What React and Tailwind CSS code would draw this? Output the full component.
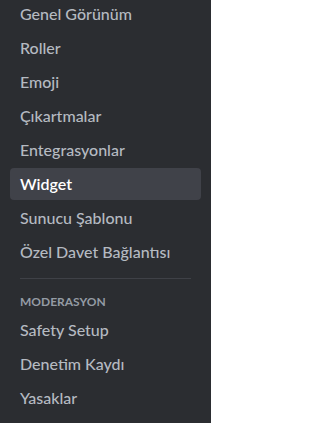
const top = ['Genel Görünüm', 'Roller', 'Emoji', 'Çıkartmalar', 'Entegrasyonlar', 'Widget', 'Sunucu Şablonu', 'Özel Davet Bağlantısı']
const moderation = ['Safety Setup', 'Denetim Kaydı', 'Yasaklar']

function Item({ label, active }) {
  return (
    <div
      className={
        'mx-[10px] mb-[2px] h-[32px] flex items-center px-[10px] rounded-[4px] text-[16px] leading-[20px] ' +
        (active ? 'bg-[#404249] text-white font-semibold' : 'text-[#b5bac1] font-medium')
      }
    >
      {label}
    </div>
  )
}

export default function App() {
  return (
    <div
      className="w-[211px] h-[423px] overflow-hidden bg-[#2b2d31]"
      style={{ fontFamily: 'Lato, "Noto Sans", sans-serif' }}
    >
      <div className="-mt-[2px]">
        {top.map((t) => (
          <Item key={t} label={t} active={t === 'Widget'} />
        ))}
      </div>
      <div className="mx-[20px] mt-[10px] h-px bg-[#3f4147]" />
      <div className="px-[20px] pt-[15px] pb-[4px] text-[12px] leading-[16px] font-bold uppercase text-[#949ba4]">
        Moderasyon
      </div>
      {moderation.map((t) => (
        <Item key={t} label={t} />
      ))}
    </div>
  )
}
